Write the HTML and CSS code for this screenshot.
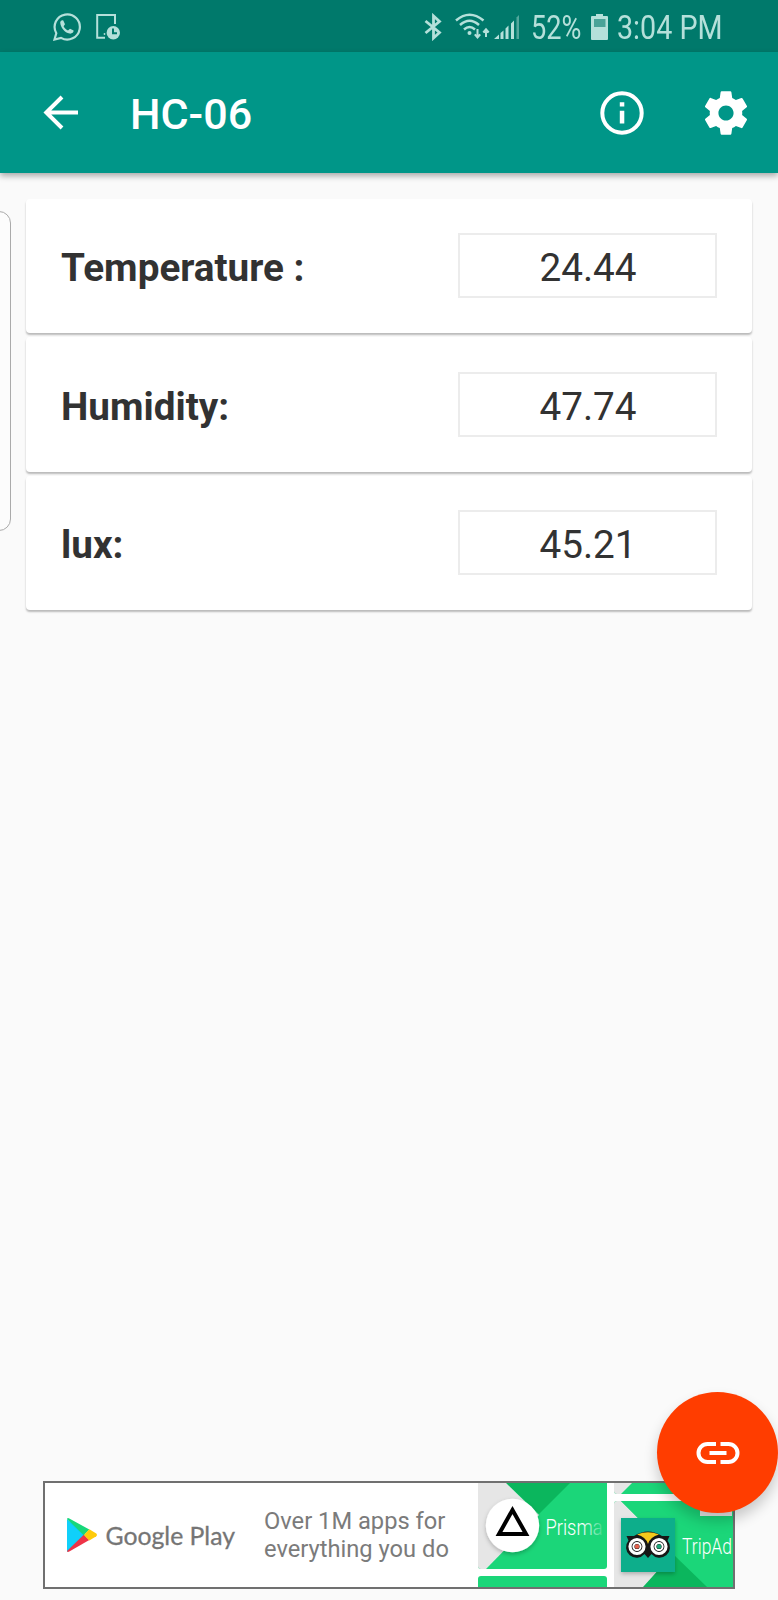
FILE: index.html
```
<!DOCTYPE html>
<html lang="en">
<head>
<meta charset="utf-8">
<title>HC-06</title>
<link rel="stylesheet" href="styles.css">
</head>
<body>
<div class="screen">
  <header class="status-bar">
    <div class="status-group">
      <svg width="28" height="28" viewBox="0 0 28 28" fill="none" stroke="currentColor" stroke-width="2.2">
        <path d="M1.5 26.5 3.300 20.200A12.600 12.600 0 1 1 8 24.900Z"/>
        <path d="M7.2 9.500C7.600 7.700 9 6.900 10.300 7.500L12 11.200 10.600 13.300C11.700 15.400 13 16.600 15 17.500L17 15.800 20.600 17.600C20.800 19.500 18.600 21 16.600 20.600 11.500 19.500 7.700 14.700 7.200 9.500Z" fill="currentColor" stroke="none"/>
      </svg>
      <svg width="25" height="28" viewBox="0 0 25 28" fill="none" stroke="currentColor" stroke-width="2">
        <path d="M19 11V2H1.200V24.800H9"/>
        <circle cx="8.500" cy="21" r=".9" fill="currentColor" stroke="none"/>
        <circle cx="17.300" cy="19.800" r="6.700" fill="currentColor" stroke="none"/>
        <path d="M17 15.500V20.200H21" stroke="#00796b"/>
      </svg>
    </div>
    <div class="status-group status-right">
      <svg class="bluetooth" width="18" height="28" viewBox="0 0 18 28" fill="none" stroke="currentColor" stroke-width="2.800">
        <path d="M1.500 8 15.500 19.500 9.500 25V3L15.500 8.500 1.500 20"/>
      </svg>
      <svg class="wifi" width="35" height="28" viewBox="0 0 35 28" fill="none" stroke="currentColor" stroke-width="2.500">
        <path d="M1 7.500Q14.500-4 28.500 7.500M5 12Q14.500 3.500 24 12M9 16.500Q14.500 11.500 20 16.500"/>
        <circle cx="14.500" cy="20" r="2" fill="currentColor" stroke="none"/>
        <path d="M22.500 16V24M19.800 21.300 22.500 24.500 25.200 21.300M31 24V16.500M28.300 19.500 31 16.300 33.700 19.500" stroke-width="2"/>
      </svg>
      <svg class="signal" width="26" height="28" viewBox="0 0 26 28" fill="currentColor">
        <path d="M0 26 5 21.500V26ZM6.500 20 9.500 17.500V26H6.500ZM11.500 15.500 14.500 12.500V26H11.500ZM17 10.500 20 7.500V26H17Z"/>
        <path d="M22.500 4.500 25 2V26H22.500Z" opacity=".45"/>
      </svg>
      <span class="status-text percent">52%</span>
      <svg class="battery" width="18" height="28" viewBox="0 0 18 28" fill="currentColor">
        <path d="M5 1H12V3H16Q17 3 17 4V26Q17 27 16 27H1Q0 27 0 26V4Q0 3 1 3H5Z"/>
        <path d="M3 6H14.500V14H3Z" fill="#4aa398"/>
      </svg>
      <span class="status-text clock">3:04 PM</span>
    </div>
  </header>

  <nav class="app-bar">
    <svg class="back" width="36" height="36" viewBox="0 0 36 36" fill="none" stroke="#fff" stroke-width="4">
      <path d="M35 17.500H4M19 2 3.300 17.500 19 33"/>
    </svg>
    <h1 class="title">HC-06</h1>
    <svg class="info" width="44" height="44" viewBox="0 0 44 44">
      <circle cx="22" cy="22" r="19.700" fill="none" stroke="#fff" stroke-width="4"/>
      <path d="M19.800 11.200H24.300V15.500H19.800ZM19.800 19.800H24.300V32.500H19.800Z" fill="#fff"/>
    </svg>
    <svg class="gear" width="52" height="52" viewBox="0 0 24 24" fill="#fff">
      <path d="M19.43 12.98c.04-.32.07-.64.07-.98s-.03-.66-.07-.98l2.11-1.65c.19-.15.24-.42.12-.64l-2-3.46c-.12-.22-.39-.3-.61-.22l-2.49 1c-.52-.4-1.08-.73-1.69-.98l-.38-2.65C14.46 2.18 14.25 2 14 2h-4c-.25 0-.46.18-.49.42l-.38 2.65c-.61.25-1.17.59-1.69.98l-2.49-1c-.23-.09-.49 0-.61.22l-2 3.46c-.13.22-.07.49.12.64l2.11 1.65c-.04.32-.07.65-.07.98s.03.66.07.98l-2.11 1.65c-.19.15-.24.42-.12.64l2 3.46c.12.22.39.3.61.22l2.49-1c.52.4 1.08.73 1.69.98l.38 2.65c.03.24.24.42.49.42h4c.25 0 .46-.18.49-.42l.38-2.65c.61-.25 1.17-.59 1.69-.98l2.49 1c.23.09.49 0 .61-.22l2-3.46c.12-.22.07-.49-.12-.64l-2.11-1.65zM12 15.500c-1.93 0-3.500-1.570-3.500-3.500s1.570-3.500 3.500-3.500 3.500 1.570 3.500 3.500-1.570 3.500-3.500 3.500z"/>
    </svg>
  </nav>

  <main class="content">
    <div class="card"><span class="label">Temperature :</span><span class="value">24.44</span></div>
    <div class="card"><span class="label">Humidity:</span><span class="value">47.74</span></div>
    <div class="card"><span class="label">lux:</span><span class="value">45.21</span></div>
  </main>
  <div class="edge-handle"></div>

  <footer class="ad">
    <svg class="play" width="176" height="50" viewBox="0 0 176 50">
      <path d="M0 9 19.500 25.500 0 42Z" fill="#00cff5"/>
      <path d="M0 10V40.500L16.500 25.500Z" fill="#10d0fa"/>
      <path d="M0 9Q.5 7.500 2.300 8.500L22.300 19.500 16.800 25.300Z" fill="#17d77a"/>
      <path d="M0 41Q.5 42.500 2.300 41.500L22.300 30 16.800 24.800Z" fill="#ee3347"/>
      <path d="M22.300 19.300 29.300 23.500Q31 25 29.300 26.300L22.300 30.500 16.800 25Z" fill="#ffcb0a"/>
      <text class="play-text" x="38.500" y="34.500" textLength="129.500" lengthAdjust="spacingAndGlyphs">Google Play</text>
    </svg>
    <p class="tagline">Over 1M apps for<br>everything you do</p>
    <svg class="ad-art" width="255" height="104" viewBox="0 0 255 104">
      <defs>
        <clipPath id="c1"><path d="M0 0H129V83Q129 86 126 86H3Q0 86 0 83Z"/></clipPath>
        <clipPath id="c2"><rect x="136" y="18" width="130" height="100" rx="3"/></clipPath>
        <linearGradient id="fade" gradientUnits="userSpaceOnUse" x1="104" y1="0" x2="125" y2="0"><stop offset="0" stop-color="#fff"/><stop offset="1" stop-color="#fff" stop-opacity=".15"/></linearGradient>
        <filter id="sh" x="-20%" y="-20%" width="140%" height="150%"><feDropShadow dx="0" dy="2" stdDeviation="2" flood-opacity=".25"/></filter>
      </defs>
      <g clip-path="url(#c1)">
        <path d="M0 0H129V86H0Z" fill="#1bd679"/>
        <path d="M28 0H92L61 31Z" fill="#0bb65d"/>
        <path d="M0 0H28L61 32 8 86H0Z" fill="#e6e6e6"/>
      </g>
      <circle cx="34.500" cy="42.500" r="26.700" fill="#fff" filter="url(#sh)"/>
      <path d="M34.500 27 21 51H48Z" fill="none" stroke="#000" stroke-width="4"/>
      <text class="app-name" x="67.500" y="51.500" textLength="57" lengthAdjust="spacingAndGlyphs" fill="url(#fade)">Prisma</text>
      <rect y="93" width="129" height="20" rx="3" fill="#1bd679"/>
      <path d="M136 0H255V11H139Q136 11 136 8Z" fill="#1bd679"/>
      <path d="M136 0H154L143 11H139Q136 11 136 8Z" fill="#e6e6e6"/>
      <g clip-path="url(#c2)">
        <path d="M136 18H266V110H136Z" fill="#1bd679"/>
        <path d="M136 18H143L195 70 161 110H136Z" fill="#e6e6e6"/>
        <path d="M143 18 195 70H215V18Z" fill="#1bd679"/>
        <path d="M195 71 229 104H165Z" fill="#0bb65d"/>
      </g>
      <path d="M222 18H254V33H222Z" fill="#e6e6e6"/>
      <path d="M143 35H197V89H143Z" fill="#0aae8b" filter="url(#sh)"/>
      <path d="M148.500 53H156Q170 44 184 53H191.500L189.500 57.500A10.300 10.300 0 0 1 173.500 71L170 75 166.500 71A10.300 10.300 0 0 1 150.500 57.500Z" fill="#171717"/>
      <path d="M159 51.500Q170 47 181 51.500 172 54 170 61 168 54 159 51.500Z" fill="#f4c91c"/>
      <g fill="none" stroke="#fff">
        <circle cx="159" cy="63.500" r="7" stroke-width="3.200"/><circle cx="181" cy="63.500" r="7" stroke-width="3.200"/>
        <circle cx="159" cy="63.500" r="3.600" stroke-width="2"/><circle cx="181" cy="63.500" r="3.600" stroke-width="2"/>
      </g>
      <circle cx="159" cy="63.500" r="2.300" fill="#e4604c"/><circle cx="181" cy="63.500" r="2.300" fill="#1ba77a"/>
      <text class="app-name" x="204" y="71" textLength="50" lengthAdjust="spacingAndGlyphs" fill="#fff">TripAd</text>
    </svg>
  </footer>

  <button class="fab" aria-label="Connect">
    <svg width="44" height="24" viewBox="0 0 44 24" fill="none" stroke="#fff" stroke-width="4">
      <path d="M20 3H11.500A9 9 0 0 0 11.500 21H20M24.500 3H32.500A9 9 0 0 1 32.500 21H24.500M13.500 12H30.500"/>
    </svg>
  </button>
</div>
</body>
</html>
```
FILE: styles.css
```
* { box-sizing: border-box; }

body {
  margin: 0;
  font-family: Roboto, "Liberation Sans", sans-serif;
}

.screen {
  position: relative;
  display: flex;
  flex-direction: column;
  width: 778px;
  height: 1600px;
  overflow: hidden;
  background: #fafafa;
}

svg { display: block; flex: none; }

.status-bar {
  display: flex;
  justify-content: space-between;
  height: 52px;
  padding: 13px 0 0 53px;
  background: #00796b;
  color: #b5e0da;
}

.status-group { display: flex; gap: 15px; }
.status-right { gap: 0; width: 354px; }
.wifi { margin-left: 13px; }
.signal { margin-left: 4px; }
.battery { margin-left: 9px; }

/* Condensed by scaling from the left edge */
.status-text {
  font-size: 32.500px;
  line-height: 38px;
  margin-top: -4px;
  white-space: nowrap;
  transform-origin: 0 0;
}

.percent { width: 51px; margin-left: 11px; transform: scaleX(.835); }
.clock { width: 106px; margin-left: 8px; transform: scaleX(.882); }

.app-bar {
  position: relative;
  display: flex;
  align-items: center;
  height: 121px;
  padding: 0 26px 0 43px;
  background: #009688;
  box-shadow: 0 3px 6px rgba(0, 0, 0, .32);
}

.title {
  flex: 1;
  margin: 3px 0 0 51px;
  color: #fff;
  font-size: 43px;
  font-weight: 500;
  line-height: 50px;
}

.info { margin-right: 56px; }
.gear { flex: none; }

.content {
  display: flex;
  flex-direction: column;
  gap: 4px;
  padding: 26px 26px 0;
}

.card {
  display: flex;
  align-items: center;
  justify-content: space-between;
  height: 134.400px;
  padding: 0 35px 1px;
  border-radius: 4px;
  background: #fff;
  box-shadow: 0 2px 2px rgba(0, 0, 0, .26);
}

.label, .value {
  color: #323232;
  font-size: 38.700px;
  line-height: 46px;
}

.label { padding-top: 5px; font-weight: 700; }

.value {
  width: 259px;
  height: 65px;
  padding: 10px 0 0 1px;
  border: 2px solid #ececec;
  text-align: center;
}

.edge-handle {
  position: absolute;
  top: 211px;
  left: -20px;
  width: 31px;
  height: 320px;
  border: 1px solid #aaa;
  border-radius: 12px;
  background: #fcfcfc;
}

.ad {
  display: flex;
  align-items: center;
  width: 692px;
  height: 108px;
  margin: auto 0 11px 43px;
  border: 2px solid #707070;
  background: #fff;
  overflow: hidden;
}

.play { margin-left: 22px; }

.play-text {
  fill: #757575;
  stroke: #757575;
  stroke-width: .3px;
  font-family: Lato, sans-serif;
  font-size: 25.500px;
}

.tagline {
  flex: 1;
  margin: 0 0 0 21px;
  color: #7b7b7b;
  font-size: 23.700px;
  line-height: 28px;
  white-space: nowrap;
}

.app-name { font-size: 21.500px; font-weight: 300; }

.fab {
  position: absolute;
  top: 1392px;
  left: 657px;
  display: flex;
  align-items: center;
  justify-content: center;
  width: 121px;
  height: 121px;
  padding: 0;
  border: 0;
  border-radius: 50%;
  background: #ff3d00;
  box-shadow: 0 8px 14px rgba(0, 0, 0, .2);
}
```
